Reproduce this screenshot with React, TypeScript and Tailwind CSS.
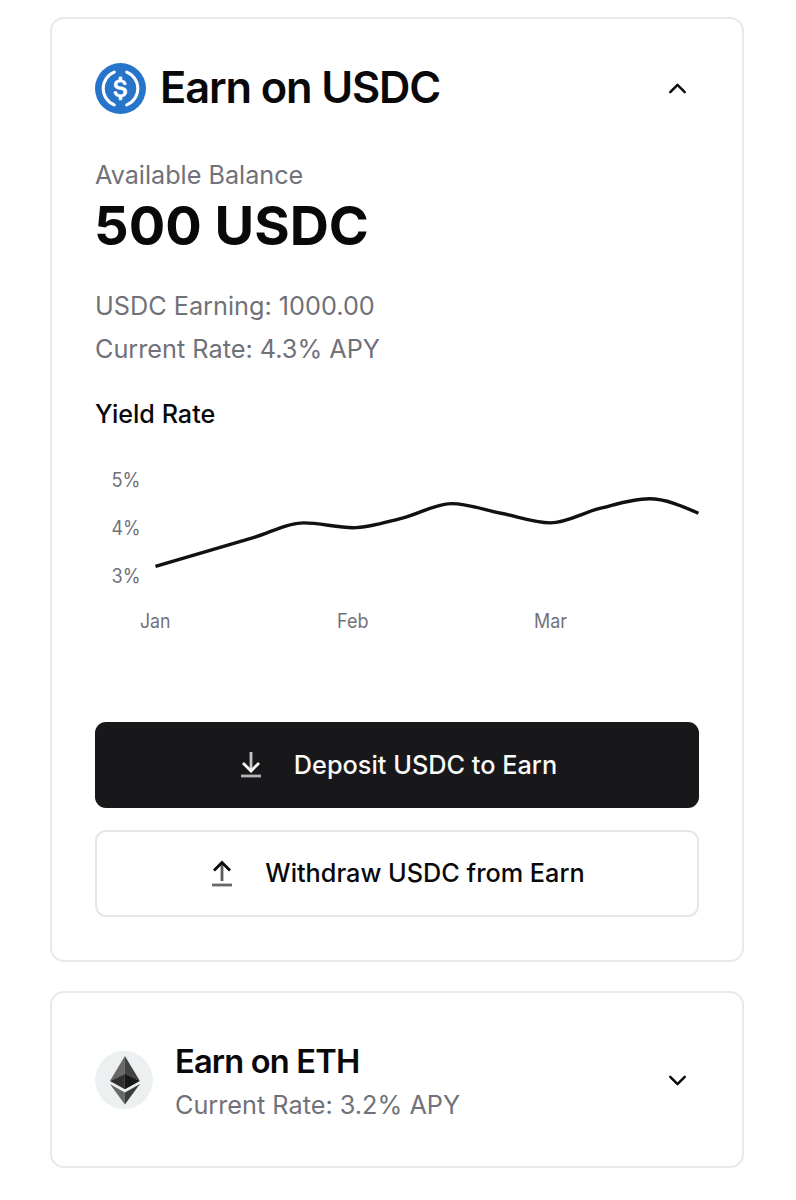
import React from "react";
import { ChevronDown, ChevronUp } from "lucide-react";

type Point = [number, number];

const rates = [3.2, 3.5, 3.8, 4.1, 4.0, 4.2, 4.5, 4.3, 4.1, 4.4, 4.6, 4.3];
const points: Point[] = rates.map((r, i) => [60.5 + i * 49.36, 34.5 + (5 - r) * 48.2]);

// Monotone cubic interpolation through the data points.
function monotonePath(p: Point[]): string {
  const n = p.length;
  const slope = p.slice(1).map((q, i) => (q[1] - p[i][1]) / (q[0] - p[i][0]));
  const t = p.map((_, i) => {
    if (i === 0 || i === n - 1) return 0;
    const a = slope[i - 1];
    const b = slope[i];
    return (Math.sign(a) + Math.sign(b)) * Math.min(Math.abs(a), Math.abs(b), 0.25 * Math.abs(a + b));
  });
  t[0] = (3 * slope[0] - t[1]) / 2;
  t[n - 1] = (3 * slope[n - 2] - t[n - 2]) / 2;
  let d = `M${p[0][0]},${p[0][1]}`;
  for (let i = 0; i < n - 1; i++) {
    const h = (p[i + 1][0] - p[i][0]) / 3;
    d += `C${p[i][0] + h},${p[i][1] + h * t[i]} ${p[i + 1][0] - h},${p[i + 1][1] - h * t[i + 1]} ${p[i + 1][0]},${p[i + 1][1]}`;
  }
  return d;
}

function UsdcLogo() {
  return (
    <svg className="size-[51px] shrink-0" viewBox="0 0 32 32" aria-hidden="true">
      <circle cx="16" cy="16" r="16" fill="#2775ca" />
      <path
        fill="#fff"
        stroke="#fff"
        strokeWidth="0.35"
        d="M20.022 18.124c0-2.124-1.28-2.852-3.84-3.156-1.828-.243-2.193-.728-2.193-1.578 0-.85.61-1.396 1.828-1.396 1.097 0 1.707.364 2.011 1.275a.458.458 0 00.427.303h.975a.416.416 0 00.427-.425v-.06a3.04 3.04 0 00-2.743-2.489V9.142c0-.243-.183-.425-.487-.486h-.915c-.243 0-.426.182-.487.486v1.396c-1.829.242-2.986 1.456-2.986 2.974 0 2.002 1.218 2.791 3.778 3.095 1.707.303 2.255.668 2.255 1.639 0 .97-.853 1.638-2.011 1.638-1.585 0-2.133-.667-2.316-1.578-.06-.242-.244-.364-.427-.364h-1.036a.416.416 0 00-.426.425v.06c.243 1.518 1.219 2.61 3.23 2.914v1.457c0 .242.183.425.487.485h.915c.243 0 .426-.182.487-.485V21.34c1.829-.303 3.047-1.578 3.047-3.217z"
      />
      <path
        fill="none"
        stroke="#fff"
        strokeWidth="1.9"
        strokeLinecap="round"
        d="M12.1 5.7a11.1 11.1 0 0 0 0 20.6M19.9 5.7a11.1 11.1 0 0 1 0 20.6"
      />
    </svg>
  );
}

function EthLogo() {
  return (
    <svg className="size-[58px] shrink-0" viewBox="0 0 58 58" aria-hidden="true">
      <circle cx="29" cy="29" r="29" fill="#ecf0f0" />
      <path fill="#686868" d="M29.9 5 14.9 30 29.9 24Z" />
      <path fill="#424242" d="M29.9 5 44.9 30 29.9 24Z" />
      <path fill="#303030" d="M14.9 30 29.9 23.2V38.3Z" />
      <path fill="#171717" d="M44.9 30 29.9 23.2V38.3Z" />
      <path fill="#686868" d="M14.9 33 29.9 41.6V53.5Z" />
      <path fill="#3d3d3d" d="M44.9 33 29.9 41.6V53.5Z" />
    </svg>
  );
}

function YieldChart() {
  return (
    <svg className="block h-[200px] w-[608px]" viewBox="0 0 608 200">
      <g className="fill-[#71717a] font-[Inter,sans-serif] text-[19.5px]">
        <text x="16.5" y="41.5" textLength="29" lengthAdjust="spacingAndGlyphs">5%</text>
        <text x="16.5" y="90" textLength="29" lengthAdjust="spacingAndGlyphs">4%</text>
        <text x="16.5" y="137.5" textLength="29" lengthAdjust="spacingAndGlyphs">3%</text>
        <text x="45" y="183" textLength="30.5" lengthAdjust="spacingAndGlyphs">Jan</text>
        <text x="242" y="183" textLength="31.5" lengthAdjust="spacingAndGlyphs">Feb</text>
        <text x="439" y="183" textLength="33" lengthAdjust="spacingAndGlyphs">Mar</text>
      </g>
      <path d={monotonePath(points)} fill="none" stroke="#111113" strokeWidth="3.4" />
    </svg>
  );
}

export default function App() {
  return (
    <main className="flex h-[1200px] w-[796px] flex-col gap-[29px] bg-white pt-[17px] pl-[50px] font-[Inter,sans-serif] text-[#09090b]">
      <section className="flex h-[945px] w-[694px] flex-col rounded-[14px] border-2 border-[#e9e9eb] px-[43px] pt-[44px] whitespace-nowrap">
        <header className="flex h-[51px] items-center">
          <UsdcLogo />
          <h1 className="mb-[2px] ml-[14px] text-[43.4px] leading-[51px] font-semibold tracking-[-0.026em]">Earn on USDC</h1>
          <button className="mr-[7px] ml-auto" aria-label="Collapse">
            <ChevronUp size={29} strokeWidth={2} />
          </button>
        </header>
        <p className="mt-[43px] text-[25.2px] leading-[36px] text-[#71717a]">Available Balance</p>
        <p className="-ml-px text-[54.2px] leading-[65px] font-bold">500 USDC</p>
        <p className="mt-[30px] text-[25.25px] leading-[36px] text-[#71717a]">USDC Earning: 1000.00</p>
        <p className="mt-[7px] text-[25.25px] leading-[36px] text-[#71717a]">Current Rate: 4.3% APY</p>
        <h2 className="mt-[29px] text-[25.2px] leading-[36px] font-medium">Yield Rate</h2>
        <div className="mt-[13px]">
          <YieldChart />
        </div>
        <button className="mt-[77px] flex h-[86px] w-[604px] shrink-0 items-center justify-center gap-[32px] rounded-[11px] bg-[#18181b] pl-[3px] text-[25.3px] font-medium text-[#fafafa]">
          <svg className="mb-[2px] h-[28px] w-[22px]" viewBox="0 0 22 28" fill="none" stroke="currentColor" strokeWidth="2.8">
            <path d="M11 2v18" className="stroke-[#c4c4c6]" />
            <path d="M3 13l8 8 8-8" />
            <path d="M1 26h20" className="stroke-[#b5b5b7]" />
          </svg>
          Deposit USDC to Earn
        </button>
        <button className="mt-[22px] flex h-[87px] w-[604px] shrink-0 items-center justify-center gap-[32px] rounded-[11px] border-2 border-[#e6e6e9] pl-[2px] text-[25.25px] font-medium">
          <svg className="mb-[2px] h-[28px] w-[22px]" viewBox="0 0 22 28" fill="none" stroke="currentColor" strokeWidth="2.8">
            <path d="M11 22V4" className="stroke-[#5c5c5e]" />
            <path d="M3 11.5l8-8 8 8" />
            <path d="M1 26h20" className="stroke-[#68686a]" />
          </svg>
          Withdraw USDC from Earn
        </button>
      </section>
      <section className="flex h-[177px] w-[694px] items-center rounded-[14px] border-2 border-[#e9e9eb] px-[43px] pt-px whitespace-nowrap">
        <EthLogo />
        <div className="ml-[22px] pt-[5px]">
          <h2 className="text-[32.6px] leading-[44px] font-semibold tracking-[-0.025em]">Earn on ETH</h2>
          <p className="text-[25.25px] leading-[44px] text-[#71717a]">Current Rate: 3.2% APY</p>
        </div>
        <button className="mr-[7px] ml-auto" aria-label="Expand">
          <ChevronDown size={29} strokeWidth={2} />
        </button>
      </section>
    </main>
  );
}
